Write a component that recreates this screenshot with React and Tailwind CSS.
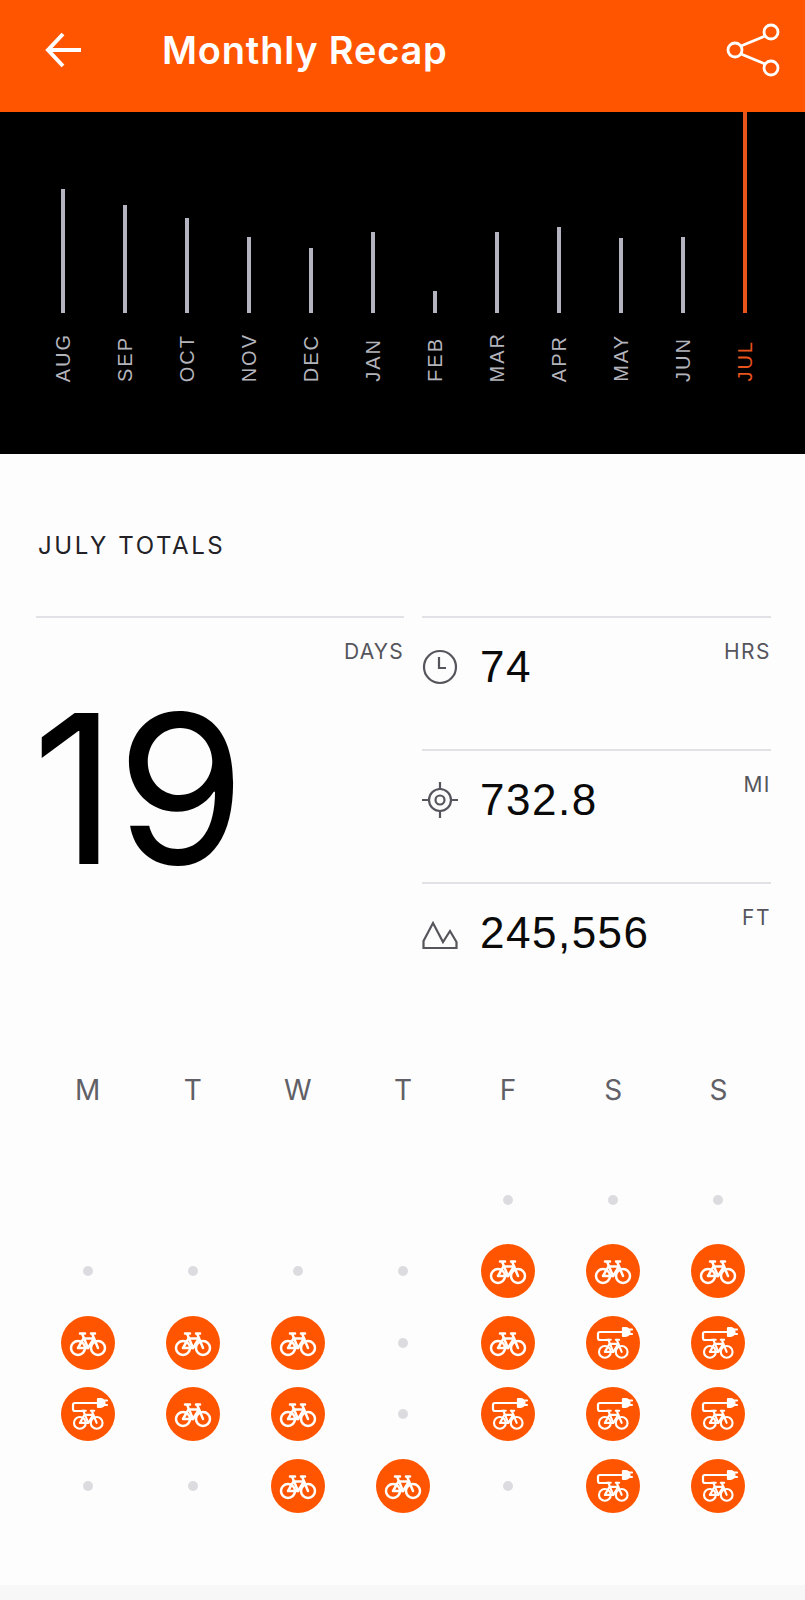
const months = [
  ["AUG", 124], ["SEP", 108], ["OCT", 95], ["NOV", 76], ["DEC", 65], ["JAN", 81],
  ["FEB", 22], ["MAR", 81], ["APR", 86], ["MAY", 75], ["JUN", 76], ["JUL", 201],
];

function Bike({ transform }) {
  return (
    <g transform={transform} fill="none" stroke="#fff" strokeWidth="2.5" strokeLinecap="round" strokeLinejoin="round">
      <circle cx="17" cy="32" r="7" />
      <circle cx="37" cy="32" r="7" />
      <path d="M17 32 L22.5 22.5 L33 22.5 L27 32 Z" />
      <path d="M19 17.5 H24 M21 17.5 L27 32 M30 17.5 H34 M31 17.5 L37 32" />
    </g>
  );
}

function DayIcon({ kind }) {
  if (kind === 0) return <div className="mx-auto size-[10px] rounded-full bg-[#dcdce0]" />;
  return (
    <div className="mx-auto size-[54px] rounded-full bg-[#ff5500]">
      <svg viewBox="0 0 54 54" className="size-[54px]">
        {kind === 1 ? (
          <Bike />
        ) : (
          <>
            <Bike transform="translate(4.6 9) scale(0.84)" />
            <g fill="none" stroke="#fff" strokeWidth="2.2" strokeLinecap="round" strokeLinejoin="round">
              <path d="M21 24 H14 Q12 24 12 22 V18 Q12 16 14 16 H37" />
              <path d="M37 12 H39.5 A4 4 0 0 1 39.5 20 H37 Z" fill="#fff" />
              <path d="M42 13.5 H46 M42 18 H46" />
            </g>
          </>
        )}
      </svg>
    </div>
  );
}

const rows = [
  [null, null, null, null, 0, 0, 0],
  [0, 0, 0, 0, 1, 1, 1],
  [1, 1, 1, 0, 1, 2, 2],
  [2, 1, 1, 0, 2, 2, 2],
  [0, 0, 1, 1, 0, 2, 2],
];

function Stat({ icon, value, unit }) {
  return (
    <div className="flex h-[133px] border-t-2 border-[#e2e2e6] pt-[27px]">
      <div className="flex h-[44px] w-[58px] items-center">{icon}</div>
      <div className="font-['Liberation_Sans',sans-serif] text-[44px] leading-[44px] tracking-[1.5px] text-[#0a0a0a]">{value}</div>
      <div className="ml-auto -mt-[5px] text-[21px] leading-[24px] tracking-[1.5px] text-[#55555c]">{unit}</div>
    </div>
  );
}

export default function App() {
  return (
    <div className="flex h-[1600px] flex-col bg-[#fdfdfd] font-['Inter',sans-serif]">
      <header className="flex h-[112px] shrink-0 items-center bg-[#ff5500] pb-[12px] text-white">
        <svg viewBox="0 0 40 40" className="ml-[43px] size-[40px]" fill="none" stroke="#fff" strokeWidth="4">
          <path d="M38 20 H6 M20 4 L5 20 L20 36" />
        </svg>
        <h1 className="ml-[79px] text-[38px] font-semibold leading-none tracking-[0.8px]">Monthly Recap</h1>
        <svg viewBox="0 0 56 56" className="ml-auto mr-[23px] size-[56px]" fill="none" stroke="#fff" strokeWidth="2.8">
          <circle cx="45" cy="10" r="7" />
          <circle cx="45" cy="46" r="7" />
          <circle cx="9" cy="28" r="7" />
          <path d="M15 24 L39 14 M15 32 L39 42" />
        </svg>
      </header>

      <section className="flex h-[342px] shrink-0 bg-black pl-[31.5px]">
        {months.map(([m, h], i) => (
          <div key={m} className="flex w-[62px] flex-col items-center">
            <div className="flex h-[201px] items-end">
              <div
                className={i === 11 ? "w-1 bg-[#e8541c]" : "w-1 bg-[#b4b4c0]"}
                style={{ height: h }}
              />
            </div>
            <div className="mt-[18px] flex h-[51px] items-end justify-center">
              <span
                className={`rotate-180 whitespace-nowrap font-['Liberation_Sans',sans-serif] text-[20px] leading-none tracking-[2px] [writing-mode:vertical-rl] ${i === 11 ? "text-[#e8541c]" : "text-[#b4b4bc]"}`}
              >
                {m}
              </span>
            </div>
          </div>
        ))}
      </section>

      <main className="flex-1 pl-[36px] pr-[34px]">
        <h2 className="mt-[77px] ml-[2px] text-[24px] leading-[29px] tracking-[2.6px] text-[#222226]">JULY TOTALS</h2>
        <div className="mt-[56px] flex gap-[18px]">
          <div className="h-[399px] w-[368px] border-t-2 border-[#e2e2e6]">
            <div className="pt-[22px] text-right text-[21px] leading-[24px] tracking-[1.2px] text-[#55555c]">DAYS</div>
            <div className="-ml-[4px] mt-[18px] text-[208px] font-normal leading-[212px] text-black">19</div>
          </div>
          <div className="flex-1">
            <Stat
              value="74"
              unit="HRS"
              icon={
                <svg viewBox="0 0 36 36" className="size-[36px]" fill="none" stroke="#55555c" strokeWidth="2.2">
                  <circle cx="18" cy="18" r="16" />
                  <path d="M17 8 V19 H24" />
                </svg>
              }
            />
            <Stat
              value="732.8"
              unit="MI"
              icon={
                <svg viewBox="0 0 36 36" className="size-[36px]" fill="none" stroke="#55555c" strokeWidth="2.2">
                  <circle cx="18" cy="18" r="11" />
                  <circle cx="18" cy="18" r="4.5" />
                  <path d="M18 0 V7 M18 29 V36 M0 18 H7 M29 18 H36" />
                </svg>
              }
            />
            <Stat
              value="245,556"
              unit="FT"
              icon={
                <svg viewBox="0 0 36 36" className="size-[36px]" fill="none" stroke="#55555c" strokeWidth="2.2">
                  <path d="M1.5 33 V26 L11 8 L21 27 L28 16 L34.5 27 V33 Z" />
                </svg>
              }
            />
          </div>
        </div>

        <div className="-ml-px mt-[58px] grid grid-cols-7 text-center">
          {["M", "T", "W", "T", "F", "S", "S"].map((d, i) => (
            <div key={i} className="text-[28px] leading-[34px] text-[#606066]">{d}</div>
          ))}
        </div>
        <div className="-ml-px mt-[57px] grid grid-cols-7 auto-rows-[71.5px] items-center">
          {rows.flat().map((k, i) => (
            <div key={i}>{k !== null && <DayIcon kind={k} />}</div>
          ))}
        </div>
      </main>
      <div className="h-[15px] shrink-0 bg-[#f7f7f8]" />
    </div>
  );
}
